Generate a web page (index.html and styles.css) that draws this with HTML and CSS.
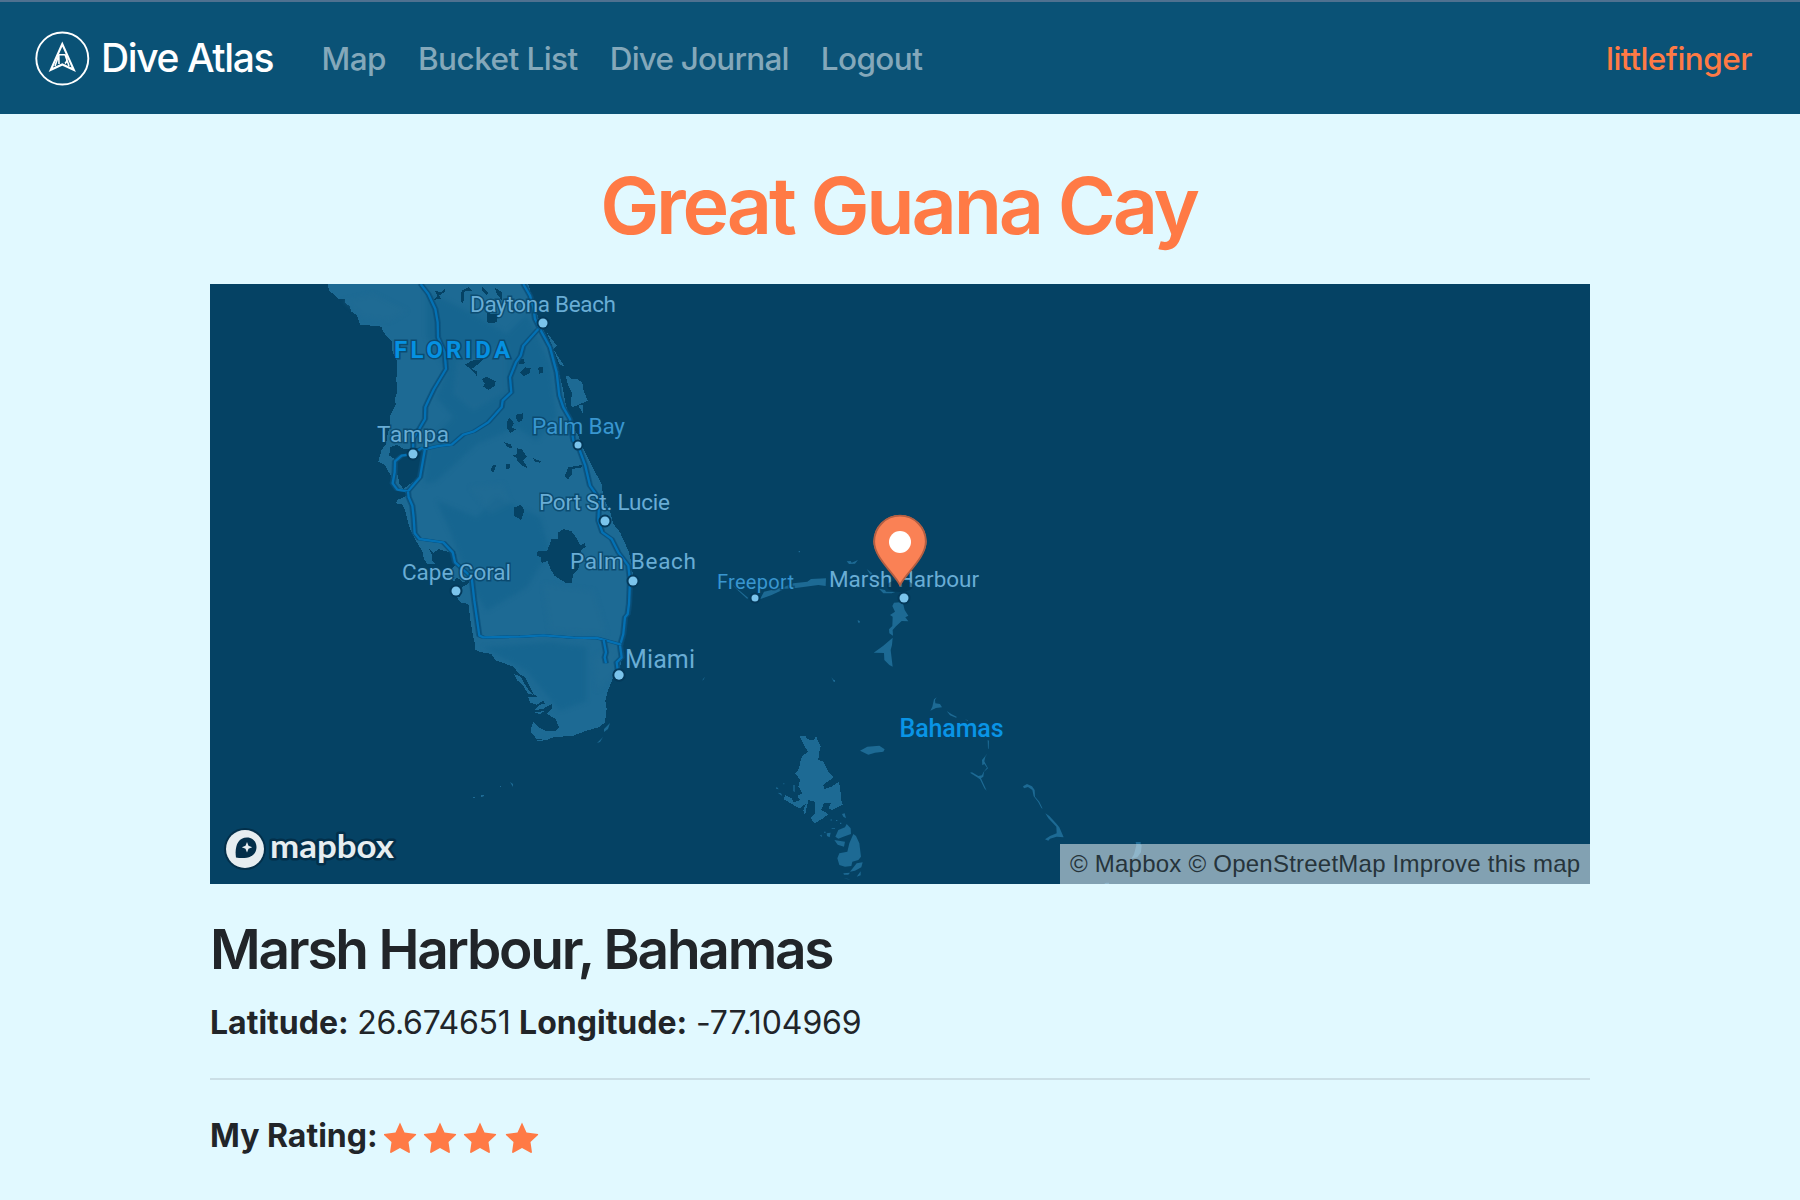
FILE: index.html
```html
<!DOCTYPE html>
<html lang="en">
<head>
<meta charset="utf-8">
<title>Dive Atlas</title>
<link rel="stylesheet" href="styles.css">
</head>
<body>
<nav class="navbar">
  <a class="brand">
    <svg class="brand-logo" viewBox="0 0 56 56" fill="none" stroke="#fff">
      <circle cx="28.300" cy="28.500" r="26" stroke-width="1.900"/>
      <path d="M28.300 14 L16.800 39.800 L28.300 34.500 L39.800 39.800 Z" stroke-width="2.100"/>
      <path d="M24.500 24.800 H30.500 C33.500 25.500 34 31.500 31 33.500 M24.800 25 L25 34 M31 24.500 L35 36 M24.500 26 L21 36" stroke-width="1.600"/>
    </svg>
    <span class="brand-name">Dive Atlas</span>
  </a>
  <div class="links">
    <a class="link">Map</a>
    <a class="link">Bucket List</a>
    <a class="link journal-link">Dive Journal</a>
    <a class="link">Logout</a>
  </div>
  <a class="user">littlefinger</a>
</nav>
<main class="container">
  <h1 class="title">Great Guana Cay</h1>
  <div class="map">
    <svg class="map-canvas" viewBox="210 284 1380 600">
      <!-- Florida -->
      <g transform="translate(310 284) scale(.33333)">
        <g class="rough">
        <path class="land" d="M53 0 L57 20 L75 34 L85 44 L104 46 L107 60 L119 65 L124 83 L140 93 L150 122 L185 125 L215 128 L219 143 L232 158 L245 170 L248 205 L262 232 L259 290 L262 320 L255 345 L257 362 L240 397 L240 425 L232 455 L228 480 L215 497 L205 533 L224 543 L241 572 L250 600 L260 615 L282 622 L293 634 L262 648 L258 658 L275 660 L283 672 L300 735 L315 765 L337 802 L342 825 L352 841 L375 840 L365 810 L380 800 L432 805 L440 840 L420 858 L410 880 L430 890 L438 905 L450 915 L440 940 L452 955 L475 960 L480 1000 L488 1050 L496 1085 L496 1098 L515 1105 L545 1110 L555 1128 L610 1148 L628 1170 L645 1180 L660 1210 L670 1230 L700 1250 L710 1268 L725 1260 L726 1272 L710 1290 L735 1303 L748 1330 L735 1342 L705 1340 L685 1330 L670 1312 L664 1330 L664 1346 L680 1365 L710 1368 L735 1358 L785 1357 L830 1340 L865 1330 L885 1316 L890 1275 L886 1250 L892 1225 L900 1205 L910 1180 L928 1160 L936 1125 L935 1085 L943 1030 L947 990 L957 960 L970 890 L965 840 L955 800 L930 745 L910 720 L900 680 L880 640 L875 600 L845 545 L830 515 L815 485 L805 455 L783 420 L775 390 L765 350 L757 305 L740 240 L722 185 L690 115 L675 70 L655 0 Z"/>
        <path class="land" d="M768 276 L775 276 L784 285 L800 285 L817 295 L820 318 L833 350 L815 358 L800 365 L785 370 L782 350 L787 330 L771 295 Z"/>
        <path class="coast" d="M710 145 L740 185 L730 195 L765 250 L748 240 Z M805 365 L818 362 L820 390 Z"/>
        <!-- Ten Thousand Islands -->
        <path class="coast" d="M612 1170 L632 1178 L650 1210 L668 1232 L655 1230 L636 1200 L622 1190 Z M655 1240 L690 1238 L700 1250 L680 1262 L660 1255 Z M690 1262 L722 1258 L700 1275 L672 1278 Z M672 1286 L706 1280 L690 1290 Z"/>
        </g>
        <g class="relief">
        <path class="shade" d="M350 20 L470 80 L590 150 L650 90 L720 240 L740 400 L680 470 L620 430 L500 480 L380 590 L345 600 L350 480 L430 400 L380 340 L410 260 L350 160 Z M380 650 L500 700 L560 640 L690 700 L720 800 L650 910 L530 980 L480 900 L420 740 Z M520 1090 L720 1075 L830 1090 L830 1250 L750 1280 L650 1160 Z"/>
        <path class="tone" d="M100 50 L190 30 L290 80 L240 110 L160 100 Z M440 230 L590 180 L590 320 L490 380 L430 330 Z M480 610 L580 600 L600 660 L540 690 Z M700 900 L850 920 L890 1050 L720 1040 Z M850 1120 L920 1080 L915 1170 L860 1220 Z"/>
        </g>
        <g class="water rough">
          <path d="M262 482 L280 495 L320 492 L338 500 L335 565 L315 590 L300 600 L280 615 L268 598 L260 560 L255 525 L238 515 L240 490 Z"/>
          <path d="M515 285 L530 278 L557 292 L555 305 L535 318 L520 308 L524 298 Z M465 242 L485 230 L520 225 L505 240 L485 255 L500 262 L500 276 L490 262 Z M629 265 L645 250 L662 252 L658 268 L640 277 Z M684 252 L697 247 L700 265 L688 270 Z M626 228 L640 224 L645 238 L628 240 Z M375 20 L395 25 L405 12 L405 24 L388 34 L393 45 L373 47 L382 36 Z M452 50 L455 20 L475 10 L487 20 L462 23 L460 62 Z M515 5 L535 28 L530 35 L515 20 Z M555 12 L577 25 L575 48 L560 30 Z M530 88 L565 90 L560 115 L533 118 Z"/>
          <path d="M600 402 L612 418 L606 430 L618 437 L600 447 L590 430 L593 408 Z M620 390 L640 388 L640 400 L635 410 L625 414 L618 404 Z M583 475 L604 482 L606 492 L592 490 Z M620 493 L635 495 L650 518 L640 530 L653 552 L635 545 L622 532 L622 522 L607 516 L620 510 Z M669 522 L692 532 L690 536 L674 533 Z M546 545 L560 542 L550 566 L543 558 Z M587 540 L600 540 L600 552 L590 556 Z M765 575 L775 550 L815 543 L815 550 L786 555 L786 570 L775 585 L768 583 Z M613 670 L632 663 L643 678 L634 708 L612 695 Z"/>
          <path d="M745 745 L760 735 L785 742 L803 768 L810 785 L825 777 L827 788 L812 800 L805 855 L790 870 L785 897 L770 898 L733 875 L722 855 L712 830 L695 838 L692 820 L680 815 L680 803 L712 800 L725 765 L745 765 Z"/>
          <path d="M355 792 L375 810 L385 795 L418 805 L435 800 L440 835 L420 850 L400 840 L380 845 L365 830 L365 810 Z M400 930 L420 915 L450 940 L455 910 L475 900 L480 885 L460 895 L440 880 L425 905 Z"/>
        </g>
        <g class="roads">
          <path d="M332 0 L355 30 L376 75 L383 115 L384 160 L404 205 L408 255 L372 315 L355 350 L346 370 L345 405 L310 465 L309 510"/>
          <path d="M640 0 L660 35 L670 70 L675 105 L690 135 L720 190 L740 265 L748 335 L760 370 L780 405 L790 470 L804 485 L826 545 L840 605 L868 645 L865 710 L877 745 L905 765 L925 805 L955 845 L960 890 L957 960 L953 990 L945 1000 L940 1050 L930 1085 L935 1120 L920 1135 L925 1172"/>
          <path d="M685 135 L640 185 L632 215 L618 235 L600 280 L604 325 L578 350 L575 370 L535 415 L490 443 L460 452 L425 482 L385 486 L345 495 L335 492 L309 510 L275 515 L255 532 L254 565 L248 598 L262 617 L294 622 L330 580 L345 495"/>
          <path d="M294 622 L296 640 L307 665 L311 700 L314 748 L328 765 L400 775 L428 805 L435 835 L485 880 L493 950 L508 1055 L520 1060 L630 1058 L700 1054 L790 1061 L860 1062 L934 1082"/>
          <path d="M881 1068 L888 1105 L884 1120 L888 1138"/>
        </g>
      </g>
      <!-- Keys -->
      <path class="coast" d="M473 797 h2 v1 h-2 Z M481 795 h3 v1 l-2 1 h-1 Z M500 786 h1 v1 h-1 Z M510 782 l3 2 v3 Z M537 740 h6 v1 h-6 Z M597 743 l6 -6 -3 5 Z M604 729 l6 -6 l-2 6 l-4 3 Z"/>
      <!-- Grand Bahama and Abaco -->
      <g class="land" transform="translate(690 500) scale(.33333)">
        <path d="M210 298 L222 275 L280 262 L310 250 L352 245 L363 237 L408 235 L407 258 L385 255 L318 264 L285 266 L245 285 Z M125 252 L174 293 L172 297 L140 268 Z M470 184 L482 183 L485 188 L504 180 L495 191 L477 192 Z M530 207 L547 220 L542 226 Z M567 266 L585 270 L588 275 L616 276 L605 280 L580 280 Z M326 153 h4 v4 h-4 Z M503 360 l7 4 -2 6 -4 -3 Z M424 532 l11 12 -3 2 Z M36 542 l8 -12 -2 8 Z"/>
        <path d="M612 308 L638 306 L644 330 L655 347 L646 352 L655 364 L635 363 L618 379 L608 390 L609 407 L598 400 L597 388 L607 378 L608 350 L600 345 L615 335 L607 318 Z M608 413 L606 435 L602 450 L608 500 L598 495 L583 480 L582 459 L551 458 L580 437 Z"/>
      </g>
      <!-- Andros, New Providence, Eleuthera, Cat Island -->
      <g class="land" transform="translate(760 680) scale(.33333)">
        <path class="rough" d="M118 168 L137 168 L140 176 L160 182 L168 168 L173 182 L182 198 L177 218 L175 240 L190 245 L205 275 L221 292 L190 314 L192 327 L215 320 L237 305 L243 345 L245 368 L250 374 L215 390 L205 385 L212 370 L192 368 L184 390 L205 402 L190 415 L163 430 L152 415 L165 400 L165 365 L145 360 L135 405 L130 390 L138 370 L120 385 L100 375 L72 358 L75 345 L95 355 L100 367 L120 360 L112 347 L128 340 L115 320 L120 300 L106 280 L118 265 L120 245 L128 228 L143 215 Z"/>
        <path d="M300 212 L322 200 L358 197 L374 208 L370 215 L345 218 L325 224 Z M226 470 L235 450 L255 442 L260 432 L272 445 L273 462 L250 470 L235 476 Z M223 480 L255 485 L252 500 L233 494 Z M280 462 L288 468 L298 490 L303 530 L295 540 L277 545 L274 558 L255 560 L238 555 L232 535 L238 520 L262 515 L268 490 Z M270 575 L290 550 L308 547 L304 562 L285 572 Z M250 580 L270 578 L265 584 L252 584 Z M250 594 L272 600 L262 596 Z M246 402 L254 400 L258 415 L250 410 Z M200 460 l12 -2 -3 14 -8 -4 Z M50 320 l6 8 -8 -2 Z M53 338 l10 2 4 8 Z M180 466 l5 -2 0 8 Z M215 445 l10 0 0 2 -10 0 Z M100 315 l4 0 0 22 -4 -4 Z M290 590 l12 -16 0 12 Z M218 0 h7 v5 h-3 Z M228 420 h4 v3 h-4 Z M212 418 h3 v4 h-3 Z M192 455 h5 v3 h-5 Z M240 428 h4 v4 h-4 Z M70 310 h3 v3 h-3 Z"/>
        <path d="M522 58 L530 52 L525 60 L526 70 L540 72 L546 82 L528 84 L511 92 L517 80 Z M560 93 L575 103 L591 111 L588 113 L570 106 Z M614 118 l10 3 v2 Z M683 180 L687 182 L686 206 L684 206 Z M683 220 L676 230 L673 244 L684 265 L672 275 L670 290 L663 295 L680 332 L673 325 L660 298 L650 291 L630 278 L636 277 L655 288 L666 286 L670 277 L681 263 L673 252 L667 256 L666 240 Z M789 319 L801 312 L816 319 L824 330 L825 350 L838 365 L848 386 L844 384 L834 365 L821 349 L817 330 L804 321 L792 325 Z M856 400 L868 408 L888 430 L898 442 L911 472 L890 470 L870 476 L865 482 L855 478 L870 468 L890 460 L889 440 L865 415 Z M1127 486 h15 v9 h3 l-2 22 -11 15 -18 4 8 -13 7 -27 Z M1034 610 l5 -2 h8 v4 h-13 Z"/>
      </g>
      <g class="dots">
        <circle cx="543" cy="323" r="4.500"/><circle cx="413" cy="454" r="4.500"/><circle cx="578" cy="445" r="3.500"/>
        <circle cx="605" cy="521" r="4.500"/><circle cx="633" cy="581" r="4.500"/><circle cx="456" cy="591" r="4.500"/>
        <circle cx="619" cy="675" r="4.700"/><circle cx="755" cy="598" r="3.500"/><circle cx="904" cy="598" r="4.500"/>
      </g>
      <g class="labels">
        <text x="470" y="312" textLength="146">Daytona Beach</text>
        <text x="377" y="441.500" textLength="72">Tampa</text>
        <text x="539" y="510" textLength="131">Port St. Lucie</text>
        <text x="570" y="569" textLength="126">Palm Beach</text>
        <text x="402" y="580" textLength="109">Cape Coral</text>
        <text class="miami" x="625" y="668" textLength="70">Miami</text>
        <text x="829" y="587" textLength="150">Marsh Harbour</text>
        <text class="minor" x="532" y="434" textLength="93">Palm Bay</text>
        <text class="minor freeport" x="717" y="588.500" textLength="77">Freeport</text>
        <text class="region" x="394" y="358" textLength="116">FLORIDA</text>
        <text class="country" x="899.500" y="737" textLength="104">Bahamas</text>
      </g>
      <!-- Marker -->
      <ellipse cx="900" cy="586" rx="13" ry="6" fill="#032f4a" opacity=".45"/>
      <path d="M900 586 C895 573 873.500 558 873.500 541.500 A26.500 26.500 0 0 1 926.500 541.500 C926.500 558 905 573 900 586 Z" fill="#fa8155"/>
      <path d="M900 585 C894 573 874.200 558 874.200 541.500 A25.800 25.800 0 0 1 925.800 541.500 C925.800 558 906 573 900 585 Z" fill="none" stroke="#b35e42" stroke-width="1.800"/>
      <circle cx="900" cy="542" r="11" fill="#fff"/>
      <!-- Mapbox wordmark -->
      <g>
        <circle cx="245" cy="849" r="21" fill="#032f4a"/>
        <circle cx="245" cy="849" r="19" fill="#e6edf0"/>
        <path d="M236 857.500 C234.500 847 237.500 837.500 247 837.500 C252.500 837.500 256.500 841.500 256.500 847 C256.500 856.500 246.500 859.500 236 857.500 Z" fill="#032f4a"/>
        <path d="M247 842 l1.500 3.700 3.700 1.500 -3.700 1.500 -1.500 3.700 -1.500 -3.700 -3.700 -1.500 3.700 -1.500 Z" fill="#e6edf0"/>
        <text class="wordmark" x="270" y="858" textLength="124" lengthAdjust="spacingAndGlyphs">mapbox</text>
      </g>
    </svg>
    <div class="attribution">© Mapbox © OpenStreetMap Improve this map</div>
  </div>
  <h2 class="place">Marsh Harbour, Bahamas</h2>
  <p class="coords"><b>Latitude:</b> <span>26.674651</span> <b>Longitude:</b> <span class="longitude">-77.104969</span></p>
  <hr class="rule">
  <div class="rating">
    <b>My Rating:</b>
    <svg class="stars" viewBox="0 0 156 32" fill="#ff7a45">
      <defs><path id="star" d="M16 0.500 L20.500 10.500 L32 12 Q32.500 12.800 31.500 13.600 L24.500 20 L26 30.500 L25 31 L16 26 L7 31 L6 30.500 L7.500 20 L0.500 13.600 Q-0.500 12.800 0 12 L11.500 10.500 Z"/></defs>
      <use href="#star"/><use href="#star" x="40"/><use href="#star" x="80"/><use href="#star" x="122"/>
    </svg>
  </div>
</main>
</body>
</html>
```
FILE: styles.css
```css
* { box-sizing: border-box; }
body {
  margin: 0;
  height: 1200px;
  overflow: hidden;
  background: #e1f9ff;
  color: #212529;
  font: 400 32px/48px Inter, "Liberation Sans", sans-serif;
}
.navbar {
  display: flex;
  align-items: center;
  height: 114px;
  padding: 0 48px 0 34px;
  background: #0a5276;
  border-top: 2px solid #4f7190;
}
.brand { display: flex; align-items: center; gap: 11px; width: 287.500px; color: #fff; }
.brand-logo { width: 56px; height: 56px; }
.brand-name { font-size: 39px; font-weight: 500; letter-spacing: -1.4px; white-space: nowrap; }
.links { display: flex; flex: 1; gap: 32px; padding-top: 2px; color: #84a8ba; }
.link, .user { font-size: 31.500px; font-weight: 450; white-space: nowrap; }
.link { letter-spacing: -0.55px; }
.journal-link { letter-spacing: -0.8px; }
.user { padding-top: 2px; letter-spacing: -0.5px; color: #ff7a45; }
.container { width: 1380px; margin: 0 auto; }
.title {
  margin: 43px 0 31px;
  color: #ff7a45;
  font-size: 79px;
  font-weight: 600;
  line-height: 96px;
  letter-spacing: -3.2px;
  text-indent: -3px;
  text-align: center;
}
.map { position: relative; height: 600px; background: #054264; }
.map-canvas { display: block; width: 1380px; height: 600px; }
.land, .coast { fill: #1d6a94; }
.relief { filter: blur(6px); }
.shade { fill: #14648f; opacity: .7; }
.tone { fill: #216b93; opacity: .55; }
.water { fill: #054264; }
.rough { shape-rendering: crispEdges; }
.roads path {
  fill: none;
  stroke: #0471b4;
  stroke-width: 7;
  stroke-linejoin: round;
  filter: drop-shadow(5px 0 0 #0a507b) drop-shadow(-5px 0 0 #0a507b);
}
.dots { fill: #7bc4ec; stroke: #04395a; stroke-width: 4; paint-order: stroke; }
.labels text {
  font: 400 22.500px Roboto, sans-serif;
  fill: #69add5;
  stroke: #064266;
  stroke-width: 3px;
  stroke-opacity: .75;
  paint-order: stroke;
}
.labels .miami { font-size: 25px; }
.labels .minor { fill: #3996cf; }
.labels .freeport { font-size: 20px; }
.labels .region { fill: #0591e2; font-size: 24px; font-weight: 700; }
.labels .country { fill: #0994e6; font-size: 25px; font-weight: 500; }
.wordmark {
  font: 700 32px Lato, sans-serif;
  fill: #e6edf0;
  stroke: #032f4a;
  stroke-width: 5px;
  stroke-linejoin: round;
  paint-order: stroke;
}
.attribution {
  position: absolute;
  right: 0;
  bottom: 0;
  width: 530px;
  height: 40px;
  padding-left: 10px;
  background: rgba(255, 255, 255, .5);
  color: #26343b;
  font: 24px/40px "Liberation Sans", Arial, sans-serif;
  letter-spacing: .23px;
  white-space: nowrap;
}
.place {
  margin: 32px 0 16px;
  font-size: 55px;
  font-weight: 600;
  line-height: 67px;
  letter-spacing: -2.25px;
}
.coords { margin: 0; letter-spacing: -.3px; white-space: nowrap; }
.coords b, .rating b { font-weight: 700; letter-spacing: 0; }
.longitude { letter-spacing: -.1px; }
.rule { height: 2px; margin: 31px 0 32px; border: 0; background: #cbdfe6; }
.rating { display: flex; align-items: center; gap: 6px; }
.stars { width: 156px; height: 32px; margin-top: 4px; }
```
